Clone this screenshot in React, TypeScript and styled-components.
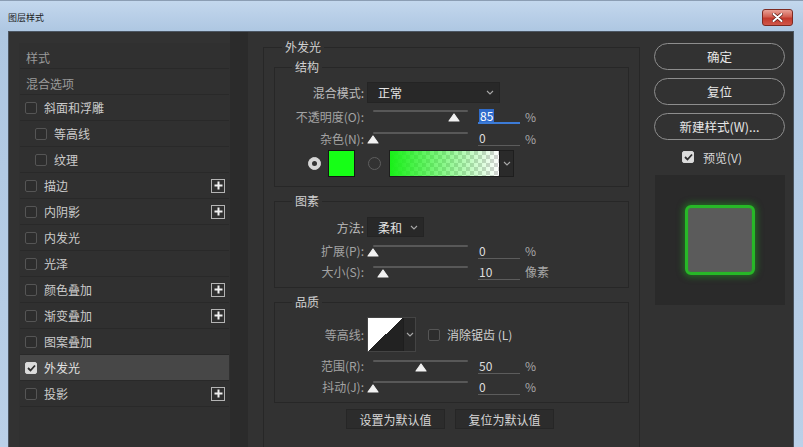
import React from "react";
import styled, { createGlobalStyle } from "styled-components";

const GlobalStyle = createGlobalStyle`
    html, body {
        margin: 0;
        padding: 0;
    }
    body {
        background: #b9cfe7;
        font-family: "Noto Sans CJK SC", "Noto Sans", sans-serif;
        font-size: 12px;
    }
`;

const Window = styled.div`
    width: 803px;
    height: 447px;
    box-sizing: border-box;
    display: flex;
    flex-direction: column;
    overflow: hidden;
    border-top: 1px solid #8b9db3;
    background: linear-gradient(to bottom, #c3d7ed 0px, #aec7e2 30px, #bad0e8 100%);
`;

const TitleBar = styled.div`
    height: 30px;
    flex-shrink: 0;
    display: flex;
    justify-content: space-between;
    align-items: flex-start;
    padding: 0 10px 0 8px;
`;

const Title = styled.div`
    margin-top: 11px;
    font-size: 9px;
    line-height: 12px;
    color: #1b1b1b;
`;

const CloseButton = styled.div`
    margin-top: 8px;
    width: 31px;
    height: 17px;
    box-sizing: border-box;
    border: 1px solid #7d2a22;
    border-radius: 3px;
    background: linear-gradient(to bottom, #e9a196 0%, #d25f51 45%, #c2392c 55%, #d0574a 100%);
    display: flex;
    align-items: center;
    justify-content: center;
`;

const Frame = styled.div`
    flex: 1;
    display: flex;
    padding: 0 9px 0 8px;
    min-height: 0;
`;

const Content = styled.div`
    flex: 1;
    display: flex;
    align-items: flex-start;
    background: #323232;
    border: 1px solid #4b5561;
    border-bottom: none;
    padding-left: 10px;
    overflow: hidden;
`;

/* ---------- left list ---------- */

const StyleList = styled.div`
    width: 211px;
    align-self: stretch;
    margin-top: 11px;
    background: #303030;
`;

const ListRow = styled.div<{ $selected?: boolean; $indent?: boolean; $header?: boolean }>`
    height: 26px;
    box-sizing: border-box;
    margin: 0 1px;
    display: flex;
    align-items: center;
    padding-top: ${(p) => (p.$header ? "3px" : "0")};
    padding-left: ${(p) => (p.$header ? "6px" : p.$indent ? "15px" : "5px")};
    padding-right: 4px;
    border-bottom: 1px solid #292929;
    background: ${(p) => (p.$selected ? "#474747" : "transparent")};
    color: ${(p) => (p.$header ? "#9a9a9a" : p.$selected ? "#e2e2e2" : "#cbcbcb")};

    .label {
        margin-left: ${(p) => (p.$header ? "0" : "7px")};
    }
`;

const Box = styled.div<{ $checked?: boolean }>`
    width: 12px;
    height: 12px;
    box-sizing: border-box;
    border-radius: 2px;
    border: 1px solid ${(p) => (p.$checked ? "#d8d8d8" : "#555555")};
    background: ${(p) => (p.$checked ? "#dcdcdc" : "#2d2d2d")};
    display: flex;
    align-items: center;
    justify-content: center;
    flex-shrink: 0;
`;

const PlusBox = styled.div`
    margin-left: auto;
    width: 14px;
    height: 14px;
    box-sizing: border-box;
    border: 1.5px solid #b4b4b4;
    display: flex;
    align-items: center;
    justify-content: center;
`;

const Gutter = styled.div`
    width: 18px;
    align-self: stretch;
    background: #2b2b2b;
`;

/* ---------- main panel ---------- */

const Group = styled.fieldset<{ $outer?: boolean }>`
    margin: ${(p) => (p.$outer ? "8px 0 -20px 15px" : "0 10px")};
    width: ${(p) => (p.$outer ? "377px" : "auto")};
    height: ${(p) => (p.$outer ? "440px" : "auto")};
    box-sizing: border-box;
    padding: 0;
    min-width: 0;
    border: 1px solid #272727;
    flex-shrink: 0;
`;

const Section = styled(Group)<{ $top: number; $pt: number; $pb: number }>`
    margin-top: ${(p) => p.$top}px;
    padding: ${(p) => p.$pt}px 0 ${(p) => p.$pb}px 0;
`;

const Legend = styled.legend<{ $indent: number }>`
    margin-left: ${(p) => p.$indent}px;
    padding: 0 3px;
    line-height: 14px;
    font-size: 12px;
    color: #d0d0d0;
`;

const Row = styled.div<{ $h: number; $mt?: number }>`
    height: ${(p) => p.$h}px;
    margin-top: ${(p) => p.$mt ?? 0}px;
    display: flex;
    align-items: center;
`;

const Label = styled.div<{ $bright?: boolean }>`
    width: 89px;
    margin-right: 3px;
    text-align: right;
    color: ${(p) => (p.$bright ? "#bdbdbd" : "#a3a3a3")};
    white-space: nowrap;
    flex-shrink: 0;
`;

const Select = styled.div<{ $w: number }>`
    width: ${(p) => p.$w}px;
    height: 100%;
    box-sizing: border-box;
    background: #282828;
    border: 1px solid #242424;
    display: flex;
    align-items: center;
    justify-content: space-between;
    padding: 0 5px 0 10px;
    color: #e4e4e4;
`;

const SliderBox = styled.div`
    position: relative;
    width: 103px;
    height: 22px;
    flex-shrink: 0;
`;

const Track = styled.div`
    margin: 5px 2px 0 6px;
    height: 2px;
    border-radius: 1px;
    background: #585858;
`;

const Thumb = styled.svg`
    position: absolute;
    top: 8px;
`;

const ValueInput = styled.div<{ $active?: boolean }>`
    margin-left: 8px;
    width: 42px;
    height: 16px;
    box-sizing: border-box;
    border-bottom: ${(p) => (p.$active ? "2px solid #3c7bd6" : "1px solid #5c5c5c")};
    display: flex;
    align-items: center;
    color: #dedede;
    padding-left: 1px;

    .sel {
        background: #2f6ccc;
        color: #ffffff;
        padding: 0 1px;
        line-height: 13px;
    }
`;

const Unit = styled.div`
    margin-left: 5px;
    color: #a8a8a8;
`;

const ColorRow = styled(Row)`
    padding-left: 33px;
`;

const Radio = styled.div<{ $on?: boolean }>`
    width: 13px;
    height: 13px;
    box-sizing: border-box;
    border-radius: 50%;
    border: 1px solid ${(p) => (p.$on ? "#d6d6d6" : "#5e5e5e")};
    background: ${(p) => (p.$on ? "#d6d6d6" : "transparent")};
    display: flex;
    align-items: center;
    justify-content: center;
    flex-shrink: 0;

    &::after {
        content: "";
        display: ${(p) => (p.$on ? "block" : "none")};
        width: 5px;
        height: 5px;
        border-radius: 50%;
        background: #333333;
    }
`;

const Swatch = styled.div`
    margin-left: 7px;
    width: 27px;
    height: 27px;
    box-sizing: border-box;
    border: 1px solid #151515;
    background: #16ff16;
`;

const GradientWell = styled.div`
    margin-left: 8px;
    display: flex;
    height: 27px;
    border: 1px solid #1e1e1e;
    box-sizing: border-box;
`;

const GradientStrip = styled.div`
    width: 109px;
    height: 100%;
    background:
        linear-gradient(to right, rgba(24, 240, 24, 1) 0%, rgba(24, 240, 24, 0.55) 45%, rgba(24, 240, 24, 0) 100%),
        conic-gradient(#d4d4d4 25%, #ffffff 0 50%, #d4d4d4 0 75%, #ffffff 0) 0 0 / 8px 8px;
`;

const DropTab = styled.div<{ $w: number }>`
    width: ${(p) => p.$w}px;
    height: 100%;
    background: #2a2a2a;
    border-left: 1px solid #1e1e1e;
    display: flex;
    align-items: center;
    justify-content: center;
`;

const ContourWell = styled.div`
    display: flex;
    height: 35px;
    border: 1px solid #444444;
    box-sizing: border-box;
`;

const ContourThumb = styled.div`
    width: 35px;
    height: 100%;
    background: linear-gradient(to top left, #222222 50%, #ffffff 50%);
`;

const CheckText = styled.div`
    margin-left: 7px;
    color: #cfcfcf;
`;

const ButtonRow = styled.div`
    margin-top: 6px;
    display: flex;
    justify-content: center;
    gap: 10px;
    padding-right: 3px;
`;

const FlatButton = styled.div`
    width: 99px;
    height: 20px;
    box-sizing: border-box;
    background: #2c2c2c;
    border: 1px solid #262626;
    display: flex;
    align-items: center;
    justify-content: center;
    color: #d6d6d6;
`;

/* ---------- right side ---------- */

const Side = styled.div`
    margin: 11px 0 0 14px;
    width: 131px;
    display: flex;
    flex-direction: column;
`;

const PillButton = styled.div<{ $mt?: number }>`
    margin-top: ${(p) => p.$mt ?? 0}px;
    height: 27px;
    box-sizing: border-box;
    border: 1.5px solid #8e8e8e;
    border-radius: 14px;
    display: flex;
    align-items: center;
    justify-content: center;
    color: #e6e6e6;
    font-size: 12.5px;
`;

const PreviewRow = styled.div`
    margin-top: 10px;
    height: 14px;
    padding-left: 28px;
    display: flex;
    align-items: center;
    color: #d8d8d8;

    span {
        margin-left: 9px;
    }
`;

const PreviewBox = styled.div`
    margin: 11px 0 0 1px;
    width: 130px;
    height: 130px;
    background: #2a2a2a;
    display: flex;
    align-items: center;
    justify-content: center;
`;

const GlowSquare = styled.div`
    width: 70px;
    height: 70px;
    box-sizing: border-box;
    border: 3px solid #27b827;
    border-radius: 6px;
    background: #5b5b5b;
    box-shadow: 0 0 6px 2px rgba(30, 170, 30, 0.5), inset 0 0 2px rgba(30, 170, 30, 0.6);
`;

/* ---------- small drawings ---------- */

function Chevron() {
    return (
        <svg width="8" height="5" viewBox="0 0 8 5">
            <polyline points="1,1 4,4 7,1" fill="none" stroke="#a8a8a8" strokeWidth="1.1" />
        </svg>
    );
}

function Check() {
    return (
        <svg width="9" height="8" viewBox="0 0 9 8">
            <polyline points="1,4 3.5,6.5 8,1.5" fill="none" stroke="#2e2e2e" strokeWidth="1.8" />
        </svg>
    );
}

function Plus() {
    return (
        <svg width="9" height="9" viewBox="0 0 9 9">
            <path d="M4.5 0.5v8M0.5 4.5h8" stroke="#f0f0f0" strokeWidth="2" />
        </svg>
    );
}

type SliderProps = { value: number };

function Slider({ value }: SliderProps) {
    return (
        <SliderBox>
            <Track />
            <Thumb width="12" height="9" viewBox="0 0 12 9" style={{ left: `${value * 95}px` }}>
                <path d="M6 1 L11 8 L1 8 Z" fill="#f2f2f2" stroke="#f2f2f2" strokeWidth="1.2" strokeLinejoin="round" />
            </Thumb>
        </SliderBox>
    );
}

type SliderFieldProps = {
    label: string;
    value: number;
    text: string;
    unit: string;
    active?: boolean;
    h: number;
    mt?: number;
};

function SliderField({ label, value, text, unit, active, h, mt }: SliderFieldProps) {
    return (
        <Row $h={h} $mt={mt}>
            <Label>{label}</Label>
            <Slider value={value} />
            <ValueInput $active={active}>
                {active ? <span className="sel">{text}</span> : text}
            </ValueInput>
            <Unit>{unit}</Unit>
        </Row>
    );
}

type StyleItem = {
    label: string;
    header?: boolean;
    indent?: boolean;
    plus?: boolean;
    checked?: boolean;
};

const STYLE_ITEMS: StyleItem[] = [
    { label: "样式", header: true },
    { label: "混合选项", header: true },
    { label: "斜面和浮雕" },
    { label: "等高线", indent: true },
    { label: "纹理", indent: true },
    { label: "描边", plus: true },
    { label: "内阴影", plus: true },
    { label: "内发光" },
    { label: "光泽" },
    { label: "颜色叠加", plus: true },
    { label: "渐变叠加", plus: true },
    { label: "图案叠加" },
    { label: "外发光", checked: true },
    { label: "投影", plus: true },
];

export default function App() {
    return (
        <>
            <GlobalStyle />
            <Window>
                <TitleBar>
                    <Title>图层样式</Title>
                    <CloseButton>
                        <svg width="11" height="9" viewBox="0 0 11 9">
                            <path d="M1.5 1 L9.5 8 M9.5 1 L1.5 8" stroke="#5a1a14" strokeWidth="3.4" strokeLinecap="round" />
                            <path d="M1.5 1 L9.5 8 M9.5 1 L1.5 8" stroke="#ffffff" strokeWidth="2" strokeLinecap="round" />
                        </svg>
                    </CloseButton>
                </TitleBar>
                <Frame>
                    <Content>
                        <StyleList>
                            {STYLE_ITEMS.map((item) => (
                                <ListRow
                                    key={item.label}
                                    $header={item.header}
                                    $indent={item.indent}
                                    $selected={item.checked}
                                >
                                    {!item.header && (
                                        <Box $checked={item.checked}>{item.checked && <Check />}</Box>
                                    )}
                                    <span className="label">{item.label}</span>
                                    {item.plus && (
                                        <PlusBox>
                                            <Plus />
                                        </PlusBox>
                                    )}
                                </ListRow>
                            ))}
                        </StyleList>
                        <Gutter />

                        <Group $outer>
                            <Legend $indent={18}>外发光</Legend>

                            <Section $top={6} $pt={8} $pb={9}>
                                <Legend $indent={17}>结构</Legend>
                                <Row $h={21}>
                                    <Label $bright>混合模式:</Label>
                                    <Select $w={133}>
                                        正常
                                        <Chevron />
                                    </Select>
                                </Row>
                                <SliderField label="不透明度(O):" value={0.85} text="85" unit="%" active h={22} mt={2} />
                                <SliderField label="杂色(N):" value={0} text="0" unit="%" h={22} />
                                <ColorRow $h={27} $mt={1}>
                                    <Radio $on />
                                    <Swatch />
                                    <Radio style={{ marginLeft: 13 }} />
                                    <GradientWell>
                                        <GradientStrip />
                                        <DropTab $w={13}>
                                            <Chevron />
                                        </DropTab>
                                    </GradientWell>
                                </ColorRow>
                            </Section>

                            <Section $top={7} $pt={9} $pb={5}>
                                <Legend $indent={17}>图素</Legend>
                                <Row $h={20}>
                                    <Label $bright>方法:</Label>
                                    <Select $w={57}>
                                        柔和
                                        <Chevron />
                                    </Select>
                                </Row>
                                <SliderField label="扩展(P):" value={0} text="0" unit="%" h={21} mt={3} />
                                <SliderField label="大小(S):" value={0.1} text="10" unit="像素" h={21} />
                            </Section>

                            <Section $top={7} $pt={8} $pb={5}>
                                <Legend $indent={17}>品质</Legend>
                                <Row $h={35}>
                                    <Label>等高线:</Label>
                                    <ContourWell>
                                        <ContourThumb />
                                        <DropTab $w={11}>
                                            <Chevron />
                                        </DropTab>
                                    </ContourWell>
                                    <Box style={{ marginLeft: 12 }} />
                                    <CheckText>消除锯齿 (L)</CheckText>
                                </Row>
                                <SliderField label="范围(R):" value={0.5} text="50" unit="%" h={21} mt={3} />
                                <SliderField label="抖动(J):" value={0} text="0" unit="%" h={21} />
                            </Section>

                            <ButtonRow>
                                <FlatButton>设置为默认值</FlatButton>
                                <FlatButton>复位为默认值</FlatButton>
                            </ButtonRow>
                        </Group>

                        <Side>
                            <PillButton>确定</PillButton>
                            <PillButton $mt={8}>复位</PillButton>
                            <PillButton $mt={8}>新建样式(W)...</PillButton>
                            <PreviewRow>
                                <Box $checked>
                                    <Check />
                                </Box>
                                <span>预览(V)</span>
                            </PreviewRow>
                            <PreviewBox>
                                <GlowSquare />
                            </PreviewBox>
                        </Side>
                    </Content>
                </Frame>
            </Window>
        </>
    );
}
